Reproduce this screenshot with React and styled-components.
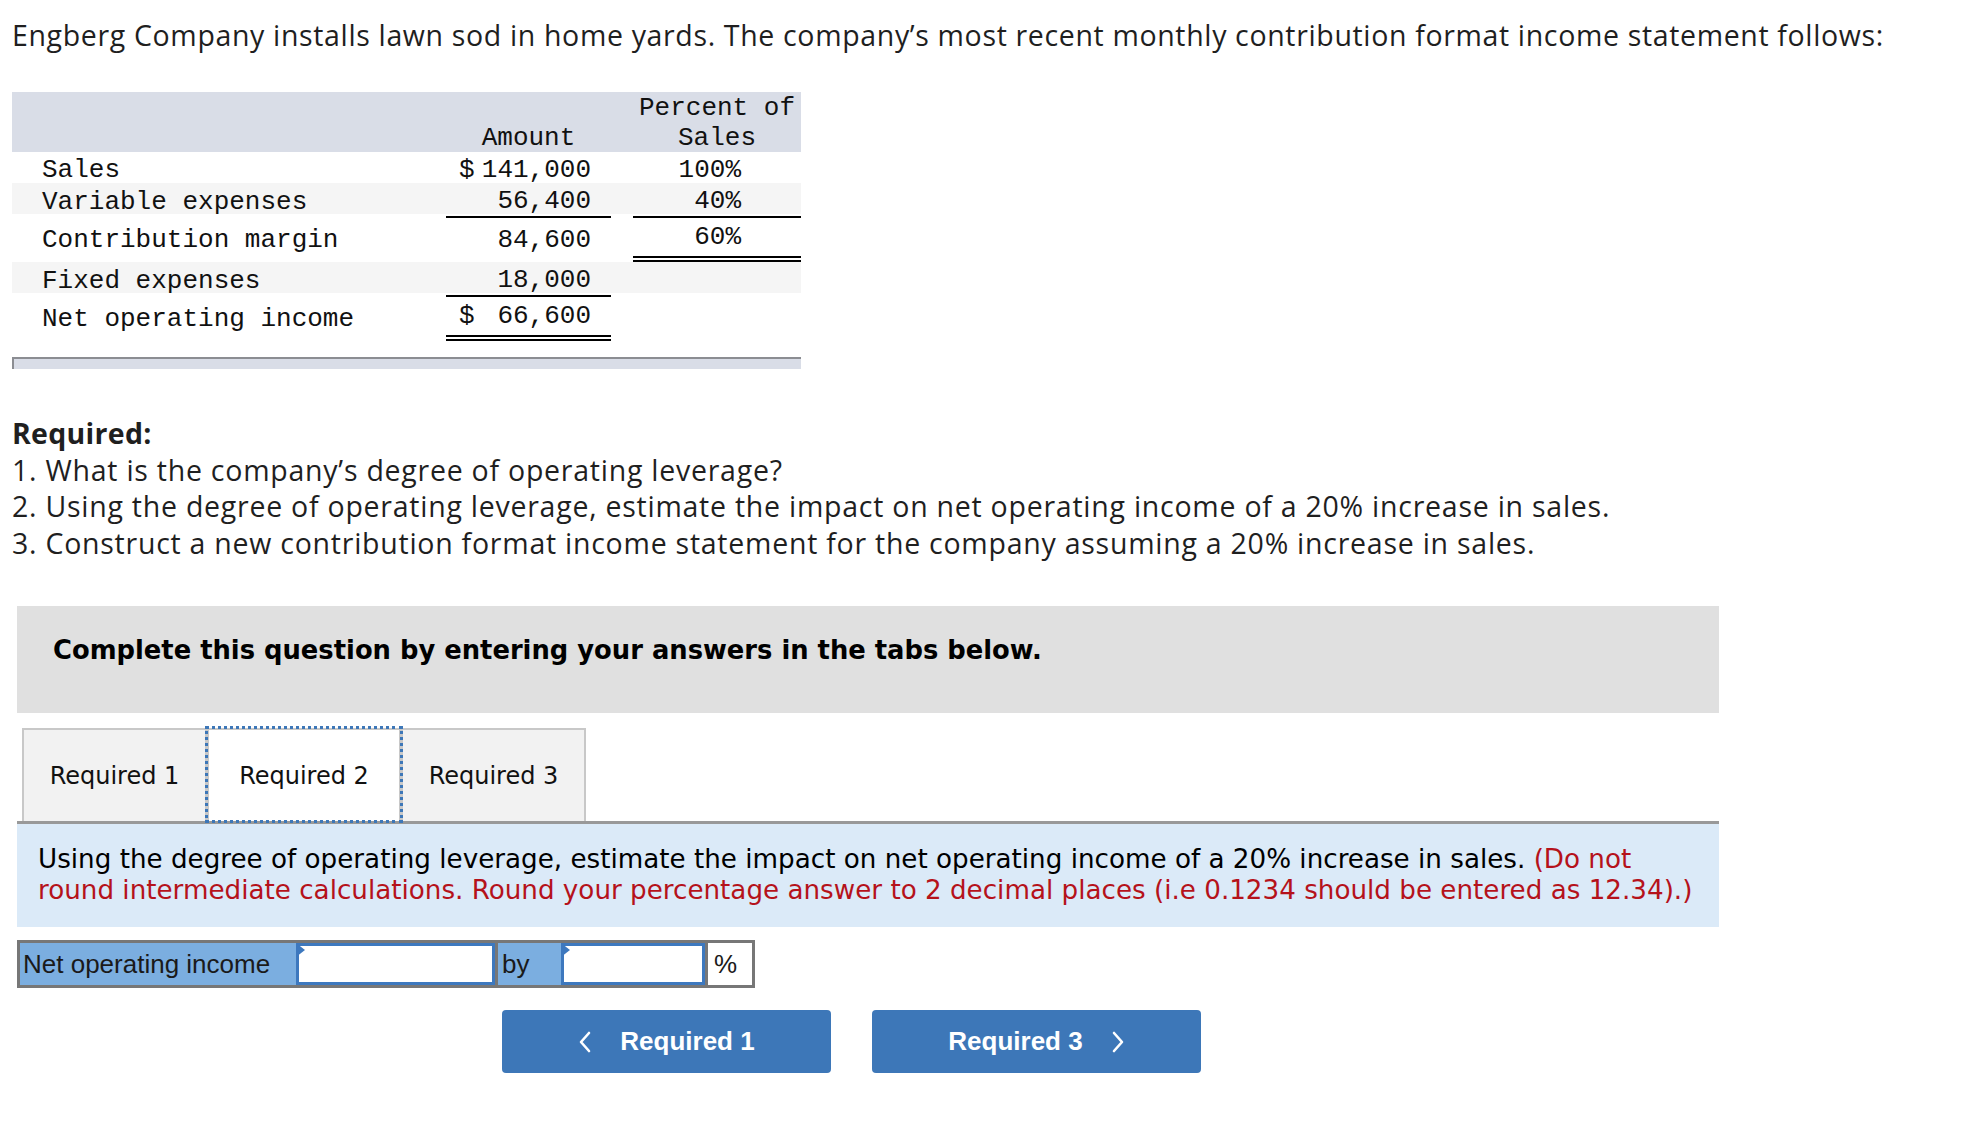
import React from 'react';
import styled, { createGlobalStyle } from 'styled-components';

const GlobalStyle = createGlobalStyle`
  body {
    margin: 0;
    background: #fff;
  }
`;

const Page = styled.div`
  padding: 17px 0 40px 12px;
  width: 1707px;
`;

const Intro = styled.p`
  margin: 0;
  font-family: 'Open Sans', Lato, sans-serif;
  font-size: 28.5px;
  letter-spacing: 0.65px;
  line-height: 36px;
  color: #1f1f1f;
  white-space: nowrap;
`;

const Statement = styled.div`
  margin-top: 39px;
  width: 789px;
  font-family: 'Liberation Mono', 'Courier New', monospace;
  font-size: 26px;
  color: #111;
`;

const Row = styled.div`
  display: grid;
  grid-template-columns: 434px 165px 22px 168px;
  height: ${(p) => p.h || 31}px;
  background: ${(p) => p.bg || '#fff'};
`;

const Label = styled.div`
  padding: 3px 0 0 30px;
  display: flex;
  align-items: center;
  white-space: pre;
`;

const Amount = styled.div`
  display: flex;
  align-items: center;
  justify-content: ${(p) => (p.split ? 'space-between' : 'flex-end')};
  padding: 3px 20px 0 13px;
  white-space: pre;
  border-bottom: ${(p) => (p.line === 'single' ? '2px solid #000' : p.line === 'double' ? '6px double #000' : 'none')};
`;

const Percent = styled(Amount)`
  padding: 3px 60px 0 0;
`;

const HeadCell = styled.div`
  display: flex;
  flex-direction: column;
  align-items: center;
  padding-top: ${(p) => p.pt || 1}px;
  line-height: 30px;
`;

const Bottom = styled.div`
  margin-top: 16px;
  height: 10px;
  background: #d9dde7;
  border-top: 2px solid #8b8d92;
  border-left: 2px solid #8b8d92;
`;

const Required = styled.div`
  margin-top: 46px;
  font-family: 'Open Sans', Lato, sans-serif;
  font-size: 28.5px;
  letter-spacing: 0.75px;
  line-height: 36.5px;
  color: #1f1f1f;
  white-space: nowrap;
  b {
    font-weight: 700;
    letter-spacing: 0.3px;
  }
`;

const Notice = styled.div`
  margin: 45px 0 0 5px;
  height: 107px;
  box-sizing: border-box;
  padding: 28px 36px 0;
  background: #e0e0e0;
  font-family: 'DejaVu Sans', Verdana, sans-serif;
  font-weight: 700;
  font-size: 25.8px;
  line-height: 32px;
  color: #000;
`;

const Tabs = styled.div`
  display: flex;
  margin: 15px 0 0 10px;
  height: 93px;
`;

const Tab = styled.div`
  box-sizing: border-box;
  width: ${(p) => p.w}px;
  display: flex;
  align-items: center;
  justify-content: center;
  font-family: 'DejaVu Sans', Verdana, sans-serif;
  font-size: 24px;
  color: #111;
  background: ${(p) => (p.active ? '#fff' : '#f2f2f2')};
  border: 2px solid #c8c8c8;
  border-bottom: none;
  outline: ${(p) => (p.active ? '3px dotted #3d77b8' : 'none')};
  outline-offset: -1px;
  position: relative;
  z-index: ${(p) => (p.active ? 2 : 1)};
`;

const Panel = styled.div`
  margin-left: 5px;
  height: 106px;
  box-sizing: border-box;
  padding: 20px 21px 0;
  background: #dbeaf8;
  border-top: 3px solid #999;
  font-family: 'DejaVu Sans', Verdana, sans-serif;
  font-size: 26.2px;
  line-height: 31px;
  color: #000;
  white-space: nowrap;
  span {
    color: #b5121b;
  }
`;

const AnswerRow = styled.div`
  margin: 13px 0 0 5px;
  display: inline-flex;
  height: 48px;
  box-sizing: border-box;
  border: 3px solid #777;
  font-family: 'Liberation Sans', Arial, sans-serif;
  font-size: 26px;
  color: #1a1a1a;
`;

const Cell = styled.div`
  box-sizing: border-box;
  width: ${(p) => p.w}px;
  display: flex;
  align-items: center;
  padding-left: ${(p) => p.pl || 0}px;
  background: ${(p) => (p.blue ? '#7baee0' : '#fff')};
  & + & {
    border-left: 3px solid #777;
  }
`;

const InputBox = styled.div`
  position: relative;
  box-sizing: border-box;
  width: ${(p) => p.w}px;
  border: 3px solid #3d78be;
  background: #fff;
  & + div {
    border-left: 3px solid #777;
  }
  &::before {
    content: '';
    position: absolute;
    left: -3px;
    top: -3px;
    border-top: 7px solid transparent;
    border-bottom: 7px solid transparent;
    border-left: 9px solid #3d78be;
  }
`;

const Nav = styled.div`
  display: flex;
  gap: 41px;
  margin: 22px 0 0 490px;
`;

const NavButton = styled.button`
  width: 329px;
  height: 63px;
  border: none;
  border-radius: 4px;
  background: #3d77b8;
  color: #fff;
  font-family: 'Liberation Sans', Arial, sans-serif;
  font-weight: 700;
  font-size: 26px;
  display: flex;
  align-items: center;
  justify-content: center;
  gap: 28px;
  padding: 0;
  svg {
    width: 14px;
    height: 24px;
  }
`;

const Chevron = ({ dir }) => (
  <svg viewBox="0 0 14 24" fill="none" stroke="#fff" strokeWidth="2.6" strokeLinecap="round" strokeLinejoin="round">
    {dir === 'left' ? <polyline points="11,3 3,12 11,21" /> : <polyline points="3,3 11,12 3,21" />}
  </svg>
);

export default function App() {
  return (
    <Page>
      <GlobalStyle />
      <Intro>
        Engberg Company installs lawn sod in home yards. The company’s most recent monthly contribution format income statement follows:
      </Intro>

      <Statement>
        <Row h={60} bg="#d9dde7">
          <div />
          <HeadCell pt={31}>Amount</HeadCell>
          <div />
          <HeadCell>
            <div>Percent of</div>
            <div>Sales</div>
          </HeadCell>
        </Row>
        <Row>
          <Label>Sales</Label>
          <Amount split>
            <span>$</span>
            <span>141,000</span>
          </Amount>
          <div />
          <Percent>100%</Percent>
        </Row>
        <Row bg="#f5f5f5">
          <Label>Variable expenses</Label>
          <Amount line="single">56,400</Amount>
          <div />
          <Percent line="single">40%</Percent>
        </Row>
        <Row h={48}>
          <Label>Contribution margin</Label>
          <Amount>84,600</Amount>
          <div />
          <Percent line="double">60%</Percent>
        </Row>
        <Row bg="#f5f5f5">
          <Label>Fixed expenses</Label>
          <Amount line="single">18,000</Amount>
          <div />
          <div />
        </Row>
        <Row h={48}>
          <Label>Net operating income</Label>
          <Amount split line="double">
            <span>$</span>
            <span>66,600</span>
          </Amount>
          <div />
          <div />
        </Row>
        <Bottom />
      </Statement>

      <Required>
        <b>Required:</b>
        <div>1. What is the company’s degree of operating leverage?</div>
        <div>2. Using the degree of operating leverage, estimate the impact on net operating income of a 20% increase in sales.</div>
        <div>3. Construct a new contribution format income statement for the company assuming a 20% increase in sales.</div>
      </Required>

      <Notice>Complete this question by entering your answers in the tabs below.</Notice>

      <Tabs>
        <Tab w={185}>Required 1</Tab>
        <Tab w={194} active>
          Required 2
        </Tab>
        <Tab w={185}>Required 3</Tab>
      </Tabs>

      <Panel>
        Using the degree of operating leverage, estimate the impact on net operating income of a 20% increase in sales.{' '}
        <span>
          (Do not
          <br />
          round intermediate calculations. Round your percentage answer to 2 decimal places (i.e 0.1234 should be entered as 12.34).)
        </span>
      </Panel>

      <AnswerRow>
        <Cell w={276} blue pl={3}>
          Net operating income
        </Cell>
        <InputBox w={199} />
        <Cell w={66} blue pl={4}>
          by
        </Cell>
        <InputBox w={144} />
        <Cell w={47} pl={6}>
          %
        </Cell>
      </AnswerRow>

      <Nav>
        <NavButton>
          <Chevron dir="left" />
          Required 1
        </NavButton>
        <NavButton>
          Required 3
          <Chevron dir="right" />
        </NavButton>
      </Nav>
    </Page>
  );
}
